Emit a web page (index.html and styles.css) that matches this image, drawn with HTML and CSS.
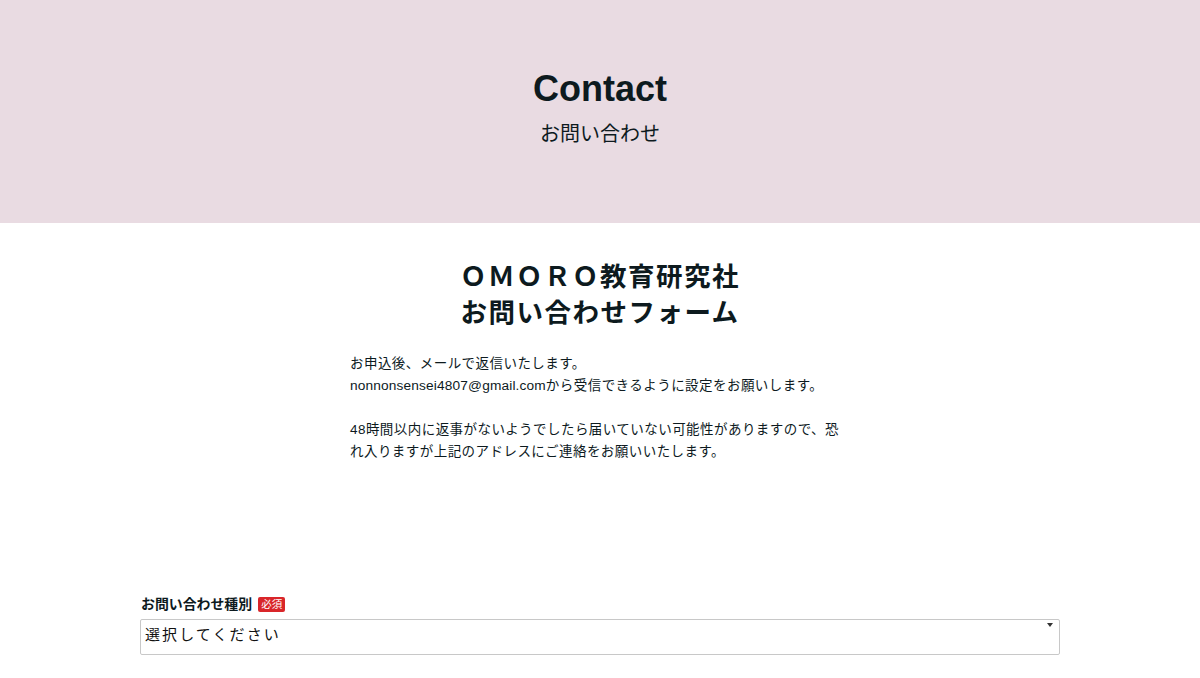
FILE: index.html
```html
<!DOCTYPE html>
<html lang="ja">
<head>
<meta charset="utf-8">
<title>Contact</title>
<link rel="stylesheet" href="styles.css">
</head>
<body>
<header class="hero">
  <h1 class="hero-title">Contact</h1>
  <p class="hero-sub">お問い合わせ</p>
</header>
<main class="content">
  <h2 class="form-title">ＯＭＯＲＯ教育研究社<br>お問い合わせフォーム</h2>
  <div class="intro">
    <p>お申込後、メールで返信いたします。<br><span class="mail">nonnonsensei4807@gmail.com</span>から受信できるように設定をお願いします。</p>
    <p>48時間以内に返事がないようでしたら届いていない可能性がありますので、恐れ入りますが上記のアドレスにご連絡をお願いいたします。</p>
  </div>
  <form class="form">
    <div class="field">
      <label class="field-label">お問い合わせ種別<span class="req">必須</span></label>
      <div class="select-wrap">
        <select class="select">
          <option>選択してください</option>
        </select>
      </div>
    </div>
  </form>
</main>
</body>
</html>
```
FILE: styles.css
```css
* { box-sizing: border-box; }
html, body { margin: 0; padding: 0; }
body {
  font-family: "Liberation Sans", Arial, "Noto Sans CJK JP", sans-serif;
  color: #0d1a1e;
  background: #fff;
}
.hero {
  background: #e9dbe2;
  height: 223px;
  display: flex;
  flex-direction: column;
  align-items: center;
  padding-top: 67px;
}
.hero-title {
  margin: 0;
  font-size: 36px;
  line-height: 44px;
  font-weight: 700;
}
.hero-sub {
  margin: 11px 0 0;
  font-size: 20px;
  line-height: 24px;
  font-family: "Liberation Sans", "Noto Sans CJK JP", sans-serif;
}
.content {
  display: flex;
  flex-direction: column;
  align-items: center;
}
.form-title {
  margin: 36px 0 0;
  font-size: 26.5px;
  line-height: 36px;
  font-weight: 700;
  letter-spacing: 1.5px;
  text-align: center;
}
.intro {
  width: 500px;
  margin-top: 22px;
  font-size: 13.5px;
  letter-spacing: 0.45px;
  line-height: 22px;
}
.intro .mail { font-size: 13.7px; letter-spacing: 0.15px; }
.intro p { margin: 0 0 22px; }
.form {
  width: 920px;
  margin-top: 109px;
}
.field-label {
  display: flex;
  align-items: center;
  font-size: 13.9px;
  font-weight: 700;
  line-height: 20px;
  padding-left: 1px;
}
.req {
  display: inline-block;
  margin-left: 6px;
  background: #d9262a;
  color: #fff;
  font-size: 10.5px;
  font-weight: 400;
  line-height: 15px;
  padding: 0 3px;
  border-radius: 2px;
}
.select-wrap {
  position: relative;
  margin-top: 5px;
}
.select-wrap::after {
  content: "";
  position: absolute;
  right: 7px;
  top: 4px;
  border-left: 3px solid transparent;
  border-right: 3px solid transparent;
  border-top: 4px solid #333;
}
.select {
  -webkit-appearance: none;
  appearance: none;
  width: 100%;
  height: 36px;
  border: 1px solid #c8c8c8;
  border-radius: 2px;
  background: #fff;
  color: #111;
  font-family: "Liberation Sans", "Noto Sans CJK JP", sans-serif;
  font-size: 15px;
  letter-spacing: 2.1px;
  padding: 0 0 6px 4px;
}
```
